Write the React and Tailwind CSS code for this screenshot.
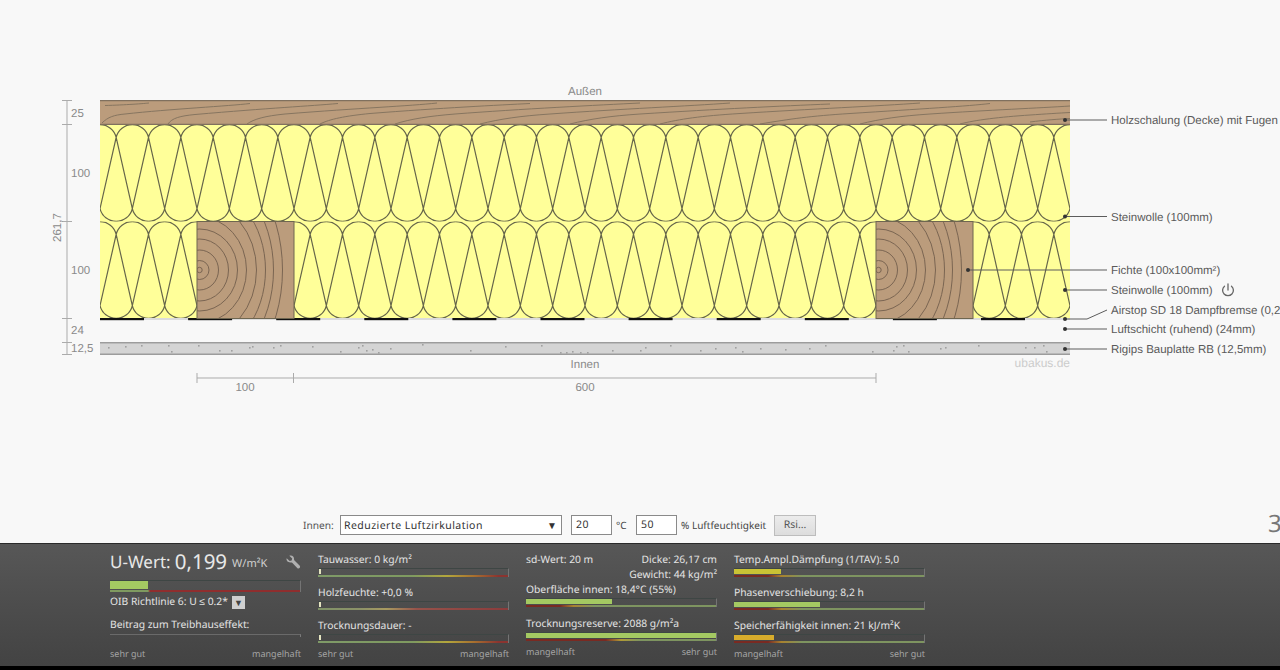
import React from "react";

const TOPY = 124.5, MIDY = 221.5, BOTY = 318.5;
const R = 32.3333;
const HR = 16.6;
const OFF = 12.9;

function bulbPath(top, bot) {
  let d = "";
  for (let k = -1; k <= 30; k++) {
    const cx = 100 + k * R;
    d += `M${cx - R / 2} ${top + OFF}A${HR} ${HR} 0 0 1 ${cx + R / 2} ${top + OFF}`;
    d += `L${cx} ${bot - OFF}L${cx - R / 2} ${top + OFF}`;
    const c2 = cx + R / 2;
    d += `M${c2 - R / 2} ${bot - OFF}A${HR} ${HR} 0 0 0 ${c2 + R / 2} ${bot - OFF}`;
  }
  return d;
}

function Timber({ x }) {
  const cx = x + 2.5, cy = 270;
  const rings = [[9.5, 9.5], [19, 20], [29, 31], [38, 41], [47, 53], [57, 68], [66, 84], [74, 100], [83, 118]];
  return (
    <g>
      <rect x={x} y={MIDY} width="97" height="97" fill="#bb9c7c" stroke="#6e6650" strokeWidth="1" />
      <clipPath id={`t${x}`}>
        <rect x={x} y={MIDY} width="97" height="97" />
      </clipPath>
      <g clipPath={`url(#t${x})`} fill="none" stroke="#7a6552" strokeWidth="1">
        <circle cx={cx} cy={cy} r="2.7" />
        {rings.map(([rx, ry], i) => (
          <ellipse key={i} cx={cx} cy={cy} rx={rx} ry={ry} />
        ))}
      </g>
    </g>
  );
}

const grainTop = [
  "M105 105.5C125 105 145 103.5 149 103",
  "M102 123C108 117 114 115 125 114C170 109 230 106 250 103.5",
  "M168 124C172 118 180 116 195 114.5C270 108 310 106 338 103.5",
  "M247 124C254 119 265 116 285 114C360 108 410 106 437 103",
  "M320 124C330 119 345 116 370 113.5C440 108 500 105 530 103.5",
  "M395 124C410 119 430 116 455 114C520 109 600 105 640 103",
  "M480 124C500 119 520 116 550 114C620 109 690 106 730 103",
  "M570 124C590 119 610 116 640 114C720 109 780 106 830 104",
  "M660 124C680 119 700 116 740 113.5C810 109 880 106 920 103",
  "M760 124C790 119 810 116 850 113.5C920 109 970 106 990 103.5",
  "M860 124C880 119 900 116 930 114C990 110 1040 108 1070 106",
  "M960 124C975 120 1000 117 1030 115C1045 114 1060 113 1070 112.5",
  "M1030 122C1045 120 1060 119 1070 118.5",
];

const specks = [
  [108, 347], [125, 346], [141, 345], [168, 345], [171, 351], [198, 345], [219, 350], [231, 350], [249, 347], [252, 346], [273, 347], [280, 345], [312, 346],
  [340, 351], [358, 347], [362, 345], [366, 350], [372, 349], [378, 352], [390, 348], [422, 344], [470, 350], [505, 346], [541, 345], [560, 352], [566, 352], [572, 351], [580, 352], [587, 352], [612, 350], [640, 350], [645, 347], [670, 345], [700, 350], [715, 348], [735, 347], [742, 351], [760, 348], [785, 349], [809, 348], [825, 345],
  [872, 351], [893, 350], [896, 346], [903, 345], [908, 351], [940, 348], [945, 347], [978, 345], [1025, 347], [1034, 347], [1043, 345], [1046, 351],
];

const leaders = [
  [1065, 120],
  [1065, 216.5],
  [968, 270],
  [1065, 290],
  [1065, 329],
  [1065, 349],
];

function Diagram() {
  const strips = [];
  for (let i = 0; i < 11; i++) strips.push(100 + i * 88.1);
  return (
    <svg width="1280" height="510" viewBox="0 0 1280 510" className="block shrink-0" style={{ fontFamily: "'Liberation Sans', Arial, sans-serif" }}>
      <defs>
        <clipPath id="lay">
          <rect x="100" y="100" width="970" height="260" />
        </clipPath>
        <clipPath id="row1">
          <rect x="100" y={TOPY} width="970" height="97" />
        </clipPath>
        <clipPath id="row2">
          <rect x="100" y={MIDY} width="970" height="97" />
        </clipPath>
      </defs>
      <text x="585" y="95" textAnchor="middle" fontSize="11.5" fill="#8a8a8a">Außen</text>

      <g stroke="#ababab" strokeWidth="1" fill="none">
        <path d="M67 100.5V354.5M62 100.5H72M62 124.5H72M62 221.5H72M62 318.5H72M62 342.5H72M62 354.5H72" />
        <path d="M197 373V383M197 378H876M293.5 373V383M876 373V383" />
      </g>
      <g fontSize="11.5" fill="#8a8a8a">
        <text x="71" y="117">25</text>
        <text x="71" y="177">100</text>
        <text x="71" y="274">100</text>
        <text x="71" y="334">24</text>
        <text x="71" y="352">12,5</text>
        <text x="245" y="391" textAnchor="middle">100</text>
        <text x="585" y="391" textAnchor="middle">600</text>
        <text x="585" y="368" textAnchor="middle">Innen</text>
        <text transform="translate(61 242) rotate(-90)">261,7</text>
      </g>
      <text x="1070" y="367" textAnchor="end" fontSize="12" fill="#cccccc">ubakus.de</text>

      <g clipPath="url(#lay)">
        <rect x="100" y={TOPY} width="970" height="194" fill="#ffff99" />
        <g clipPath="url(#row1)">
          <path d={bulbPath(TOPY, MIDY)} fill="none" stroke="#66664a" strokeWidth="1.2" />
        </g>
        <g clipPath="url(#row2)">
          <path d={bulbPath(MIDY, BOTY)} fill="none" stroke="#66664a" strokeWidth="1.2" />
        </g>
        <rect x="100" y="100" width="970" height="24.5" fill="#bb9c7c" />
        <path d="M100 100.7H1070M100 124.3H1070" stroke="#80705e" strokeWidth="1.2" />
        <g fill="none" stroke="#80705c" strokeWidth="0.9">
          {grainTop.map((d, i) => <path key={i} d={d} />)}
        </g>
        <rect x="100" y="318" width="970" height="2" fill="#dcdcdc" />
        {strips.map((x) => <rect key={x} x={x} y="318" width="44" height="2.2" fill="#111111" />)}
        <rect x="100" y="342.5" width="970" height="12" fill="#d4d4d4" />
        <path d="M100 342.8H1070M100 354.2H1070" stroke="#7c7c7c" strokeWidth="1" />
        <g fill="#a0a0a0">
          {specks.map(([x, y], i) => <rect key={i} x={x} y={y} width="1.6" height="1.6" />)}
        </g>
      </g>
      <Timber x={197} />
      <Timber x={876} />

      <g stroke="#5c5c5c" strokeWidth="1" fill="none">
        {leaders.map(([x, y]) => <path key={y} d={`M${x} ${y}H1107`} />)}
        <path d="M1065 319H1087L1107 310" />
      </g>
      <g fill="#333333">
        {leaders.map(([x, y]) => <circle key={y} cx={x} cy={y} r="2" />)}
        <circle cx="1065" cy="319" r="2" />
      </g>
      <g fontSize="11.5" fill="#5a5a5a">
        <text x="1111" y="124">Holzschalung (Decke) mit Fugen</text>
        <text x="1111" y="221">Steinwolle (100mm)</text>
        <text x="1111" y="274">Fichte (100x100mm²)</text>
        <text x="1111" y="294">Steinwolle (100mm)</text>
        <text x="1111" y="314">Airstop SD 18 Dampfbremse (0,2mm)</text>
        <text x="1111" y="333">Luftschicht (ruhend) (24mm)</text>
        <text x="1111" y="353">Rigips Bauplatte RB (12,5mm)</text>
      </g>
      <g fill="none" stroke="#666666" strokeWidth="1.3" strokeLinecap="round">
        <path d="M1228 284V290" />
        <path d="M1224.5 286.2A5.4 5.4 0 1 0 1231.5 286.2" />
      </g>
    </svg>
  );
}

const stripBad = "linear-gradient(90deg,#7f9a68 0%,#7f9a60 50%,#b3a63c 68%,#a8702f 82%,#8b3430 95%,#8b3430 100%)";
const stripSoft = "linear-gradient(90deg,#7f9268 0%,#8c9268 22%,#a89a60 36%,#96524a 52%,#8b3c3c 100%)";
const stripGood = "linear-gradient(90deg,#7a2a22 0%,#7a2a22 18%,#a8822f 25%,#7e9460 36%,#7e9460 100%)";
const stripGood2 = "linear-gradient(90deg,#7a2a22 0%,#7a2a22 42%,#b09a35 50%,#7e9460 60%,#7e9460 100%)";
const stripU = "linear-gradient(90deg,#7f9a60 0%,#7f9a60 20%,#8f2e2e 21%,#8f2e2e 100%)";

function Gauge({ width = 0, fill = "#a4c962", strip, h = "h-[5px]" }) {
  return (
    <div className="border-t border-r border-t-[#3e4644] border-r-[#747474]">
      <div className={`${h} flex`}>
        {width > 0 ? (
          <div className="h-full" style={{ width: `${width}px`, background: fill }} />
        ) : (
          <div className="h-full w-[1.5px] ml-[1px] bg-[#e4e4c0]" />
        )}
      </div>
      <div className="h-[1px]" />
      <div className="h-[2px]" style={{ background: strip }} />
    </div>
  );
}

function Label({ children, className = "" }) {
  return <div className={`text-[10.3px] leading-[14px] text-[#e4e4e4] whitespace-nowrap ${className}`}>{children}</div>;
}

function Scale({ left, right }) {
  return (
    <div className="flex justify-between text-[9px] leading-[12px] text-[#a4a4a4]">
      <span>{left}</span>
      <span>{right}</span>
    </div>
  );
}

function Wrench() {
  return (
    <svg width="16" height="16" viewBox="0 0 24 24" className="ml-[18px] shrink-0 self-center" fill="#b0b0b0">
      <path d="M2.5 6.5 7 10.5l3-.7.8-3L6.5 2.6C10 1 14 3.8 13.6 7.8c-.1.9 0 1.4.7 2l7.5 7.6c1.1 1.1 1.1 2.6.1 3.6-1 1-2.5 1-3.6-.1l-7.5-7.6c-.6-.6-1.2-.8-2-.7C4.7 13 1.4 10.2 2.5 6.5Z" />
    </svg>
  );
}

export default function App() {
  return (
    <div className="w-[1280px] h-[670px] overflow-hidden flex flex-col bg-[#f8f8f8] font-['Liberation_Sans',Arial,sans-serif] [text-rendering:geometricPrecision]">
      <Diagram />

      <div className="h-[33px] shrink-0 flex items-start pl-[303px] text-[#444444]">
        <span className="w-[29px] text-[10.2px] leading-[14px] mt-[8px] text-[#555555]">Innen:</span>
        <div className="ml-[8px] mt-[5px] w-[222px] h-[20px] bg-white border border-[#8a8a8a] flex items-center justify-between pl-[3px] pr-[4px] font-['DejaVu_Sans',sans-serif] text-[#333333]">
          <span className="mt-[2px] text-[10.5px] leading-[14px] tracking-[0.45px] whitespace-nowrap">Reduzierte Luftzirkulation</span>
          <span className="text-[10px]">▼</span>
        </div>
        <div className="ml-[9px] mt-[5px] w-[41px] h-[20px] bg-white border border-[#8a8a8a] pl-[4px] text-[10.5px] leading-[19px] tracking-[0.4px] font-['DejaVu_Sans',sans-serif] text-[#333333]">20</div>
        <span className="ml-[4px] w-[20px] mt-[8px] text-[10px] leading-[14px]">°C</span>
        <div className="mt-[5px] w-[41px] h-[20px] bg-white border border-[#8a8a8a] pl-[4px] text-[10.5px] leading-[19px] tracking-[0.4px] font-['DejaVu_Sans',sans-serif] text-[#333333]">50</div>
        <span className="ml-[4px] w-[85px] mt-[8px] text-[10px] leading-[14px] whitespace-nowrap">% Luftfeuchtigkeit</span>
        <div className="ml-[8px] mt-[5px] w-[42px] h-[21px] bg-gradient-to-b from-[#ececec] to-[#dddddd] border border-[#bdbdbd] text-center text-[10.5px] leading-[19px] text-[#555555]">Rsi...</div>
        <span className="ml-auto w-[12px] text-[24px] leading-[28px] text-[#777777]">3</span>
      </div>

      <div className="h-[123px] shrink-0 border-t border-[#2a2a2a] bg-gradient-to-b from-[#575757] to-[#434343] pl-[110px] flex gap-[17px] pt-[7px]">
        <div className="w-[191px] flex flex-col">
          <div className="flex items-end h-[22px] text-[#e8e8e8] whitespace-nowrap">
            <span className="text-[17px] leading-[22px]">U-Wert:</span>
            <span className="ml-[4px] text-[20.5px] leading-[22px]">0,199</span>
            <span className="ml-[5px] text-[11px] leading-[18px] text-[#d0d0d0]">W/m²K</span>
            <Wrench />
          </div>
          <div className="mt-[7px]">
            <Gauge width={38} strip={stripU} h="h-[8px]" />
          </div>
          <Label className="mt-[3px] flex items-center">
            OIB Richtlinie 6: U ≤ 0.2*
            <span className="ml-[4px] w-[13px] h-[13px] bg-[#cfcfcf] flex items-center justify-center text-[9px] leading-none text-[#444444]">▼</span>
          </Label>
          <Label className="mt-[9px]">Beitrag zum Treibhauseffekt:</Label>
          <div className="mt-[2px] h-[3px] border-t border-r border-t-[#6a6a6a] border-r-[#7a7a7a]" />
          <div className="mt-[11px]"><Scale left="sehr gut" right="mangelhaft" /></div>
        </div>

        <div className="w-[191px] flex flex-col">
          <Label className="mt-[2px]">Tauwasser: 0 kg/m²</Label>
          <div className="mt-[1px]"><Gauge strip={stripBad} /></div>
          <Label className="mt-[9px]">Holzfeuchte: +0,0 %</Label>
          <div className="mt-[1px]"><Gauge strip={stripSoft} /></div>
          <Label className="mt-[9px]">Trocknungsdauer: -</Label>
          <div className="mt-[1px]"><Gauge strip={stripBad} /></div>
          <div className="mt-[5px]"><Scale left="sehr gut" right="mangelhaft" /></div>
        </div>

        <div className="w-[191px] flex flex-col">
          <div className="flex justify-between mt-[2px]">
            <Label>sd-Wert: 20 m</Label>
            <div className="text-right">
              <Label>Dicke: 26,17 cm</Label>
              <Label className="mt-[1px]">Gewicht: 44 kg/m²</Label>
            </div>
          </div>
          <Label className="mt-[1px]">Oberfläche innen: 18,4°C (55%)</Label>
          <div className="mt-[1px]"><Gauge width={86} strip={stripGood} /></div>
          <Label className="mt-[10px]">Trocknungsreserve: 2088 g/m²a</Label>
          <div className="mt-[1px]"><Gauge width={190} strip={stripGood2} /></div>
          <div className="mt-[5px]"><Scale left="mangelhaft" right="sehr gut" /></div>
        </div>

        <div className="w-[191px] flex flex-col">
          <Label className="mt-[2px]">Temp.Ampl.Dämpfung (1/TAV): 5,0</Label>
          <div className="mt-[1px]"><Gauge width={47} fill="#c9c235" strip={stripGood} /></div>
          <Label className="mt-[9px]">Phasenverschiebung: 8,2 h</Label>
          <div className="mt-[1px]"><Gauge width={86} strip={stripGood} /></div>
          <Label className="mt-[9px]">Speicherfähigkeit innen: 21 kJ/m²K</Label>
          <div className="mt-[1px]"><Gauge width={40} fill="#d8ac2c" strip={stripGood} /></div>
          <div className="mt-[5px]"><Scale left="mangelhaft" right="sehr gut" /></div>
        </div>
      </div>

      <div className="flex-1 bg-black" />
    </div>
  );
}
